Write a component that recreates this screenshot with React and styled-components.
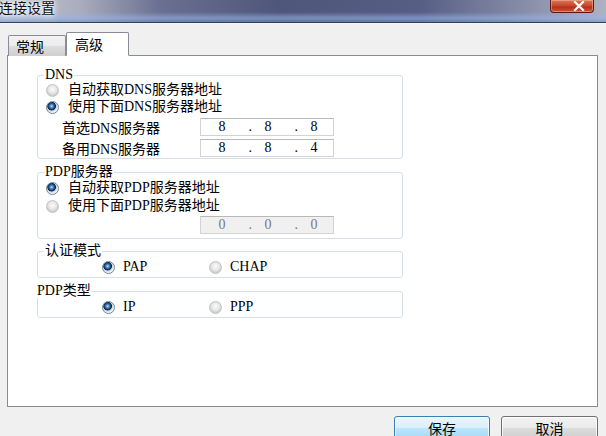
import React from 'react';
import styled, { createGlobalStyle } from 'styled-components';

const GlobalStyle = createGlobalStyle`
  html, body {
    margin: 0;
    padding: 0;
    background: #f0f0f0;
    overflow: hidden;
  }
  body {
    font-family: "Liberation Serif", "Noto Sans CJK SC", serif;
    font-size: 14px;
    color: #000;
  }
`;

const Window = styled.div`
  width: 606px;
  height: 436px;
  display: flex;
  flex-direction: column;
  background: #f0f0f0;
  overflow: hidden;
`;

const TitleBar = styled.div`
  height: 22px;
  flex: none;
  display: flex;
  justify-content: space-between;
  align-items: flex-start;
  border-bottom: 1px solid #2f3f5e;
  background:
    linear-gradient(180deg, rgba(255,255,255,0) 0%, rgba(255,255,255,0) 55%, rgba(150,180,230,0.6) 82%, rgba(110,140,195,0.5) 100%),
    linear-gradient(90deg, #c3c6d0 0px, #a9adbd 80px, #6a7092 160px, #4f567b 280px, #565e86 420px, #8a90aa 530px, #aeb2c2 606px);
`;

const Title = styled.div`
  font-family: "Noto Sans CJK SC", sans-serif;
  font-size: 14px;
  line-height: 15px;
  margin-left: -1px;
  color: #111;
  text-shadow: 0 0 6px #fff, 0 0 3px #fff, 0 0 10px #fff;
`;

const CloseButton = styled.div`
  width: 44px;
  height: 13px;
  margin-right: 12px;
  display: flex;
  align-items: center;
  justify-content: center;
  padding-left: 14px;
  box-sizing: border-box;
  border: 1px solid #5e1a10;
  border-top: none;
  border-radius: 0 0 4px 4px;
  background: linear-gradient(180deg, #d9765c 0%, #c84a2e 45%, #b3321a 60%, #c9563a 100%);
  box-shadow: inset 0 0 0 1px rgba(255,200,180,0.45);
`;

const Body = styled.div`
  flex: 1;
  display: flex;
  flex-direction: column;
  padding: 9px 8px 0 7px;
  border-top: 1px solid #f6f6f6;
`;

const TabStrip = styled.div`
  display: flex;
  align-items: flex-end;
  padding-left: 1px;
  height: 23px;
  margin-bottom: -1px;
  position: relative;
  z-index: 1;
`;

const Tab = styled.div`
  box-sizing: border-box;
  height: ${p => (p.$active ? '24px' : '21px')};
  width: ${p => (p.$active ? '63px' : '58px')};
  padding: ${p => (p.$active ? '2px 0 0 8px' : '1px 0 0 7px')};
  line-height: 18px;
  font-family: "Noto Sans CJK SC", sans-serif;
  font-size: 14px;
  border: 1px solid #898c95;
  border-bottom: ${p => (p.$active ? '1px solid #fff' : 'none')};
  border-radius: 2px 2px 0 0;
  background: ${p =>
    p.$active
      ? '#fff'
      : 'linear-gradient(180deg, #f2f2f2 0%, #ebebeb 50%, #dddddd 51%, #cfcfcf 100%)'};
`;

const Panel = styled.div`
  box-sizing: border-box;
  height: 352px;
  background: #fff;
  border: 1px solid #898c95;
  padding: 0 0 0 29px;
  display: flex;
  flex-direction: column;
  align-items: flex-start;
`;

const Group = styled.fieldset`
  box-sizing: border-box;
  width: 366px;
  margin: ${p => p.$top}px 0 0 0;
  padding: 0 0 ${p => p.$bottom}px 0;
  border: 1px solid #d5dfe5;
  border-radius: 3px;
  min-inline-size: 0;
`;

const Legend = styled.legend`
  padding: 0 1px;
  margin-left: ${p => (p.$flush ? '-2px' : '6px')};
  line-height: 14px;
  height: 14px;
  font-size: 14px;
  background: #fff;
`;

const RadioRow = styled.label`
  display: flex;
  align-items: center;
  gap: 9px;
  height: 16px;
  padding-left: 8px;
  margin-top: ${p => p.$top || 0}px;
  line-height: 16px;
  white-space: nowrap;
`;

const Radio = styled.span`
  flex: none;
  width: 11px;
  height: 11px;
  border-radius: 50%;
  border: 1px solid ${p => (p.$checked ? '#74879a' : '#c3c3c3')};
  background: ${p =>
    p.$checked
      ? 'radial-gradient(circle at 42% 38%, #d6ecfa 0px, #4f8cc4 1.5px, #1d4c7e 3px, #0c2440 4px, #c9d0d8 4.6px, #eef1f4 6px)'
      : 'radial-gradient(circle at 50% 40%, #fbfbfb 0px, #e6e6e6 4px, #cdcdcd 6px)'};
`;

const OptionRow = styled.div`
  display: grid;
  grid-template-columns: 107px 120px;
  padding-left: 64px;
  margin-top: 1px;
  height: 16px;
`;

const Option = styled.label`
  display: flex;
  align-items: center;
  gap: 8px;
  line-height: 16px;
`;

const FieldRow = styled.div`
  display: flex;
  align-items: center;
  padding-left: 24px;
  margin-top: ${p => p.$top}px;
  height: 18px;
`;

const FieldLabel = styled.span`
  width: 138px;
  flex: none;
  white-space: nowrap;
`;

const IpBox = styled.div`
  box-sizing: border-box;
  width: 134px;
  height: 18px;
  display: grid;
  grid-template-columns: 24px 22px 24px 22px 24px;
  padding-left: 9px;
  align-items: center;
  font-size: 14px;
  line-height: 16px;
  border: 1px solid #d3d3d3;
  border-top-color: #b8b8b8;
  background: ${p => (p.$disabled ? '#f0f0f0' : '#fff')};
  color: ${p => (p.$disabled ? '#7a7a7a' : '#000')};
`;

const Octet = styled.span`
  text-align: center;
`;

const Dot = styled.span`
  text-align: right;
  padding-right: 4px;
`;

const ButtonRow = styled.div`
  display: flex;
  justify-content: flex-end;
  gap: 11px;
  margin-top: 9px;
`;

const Button = styled.button`
  box-sizing: border-box;
  width: ${p => p.$w}px;
  height: 23px;
  font-family: "Noto Sans CJK SC", sans-serif;
  font-size: 14px;
  line-height: 20px;
  padding: 0;
  color: #000;
  border-radius: 3px;
  border: 1px solid ${p => (p.$primary ? '#3c7fb1' : '#707070')};
  box-shadow: inset 0 0 0 1px rgba(255, 255, 255, 0.75);
  background: ${p =>
    p.$primary
      ? 'linear-gradient(180deg, #eaf6fd 0%, #d9f0fc 50%, #bee6fd 51%, #a7d9f5 100%)'
      : 'linear-gradient(180deg, #f2f2f2 0%, #ebebeb 50%, #dddddd 51%, #cfcfcf 100%)'};
`;

const Ip = ({ parts, disabled }) => (
  <IpBox $disabled={disabled}>
    <Octet>{parts[0]}</Octet>
    <Dot>.</Dot>
    <Octet>{parts[1]}</Octet>
    <Dot>.</Dot>
    <Octet>{parts[2]}</Octet>
  </IpBox>
);

const App = () => {
  return (
    <Window>
      <GlobalStyle />
      <TitleBar>
        <Title>连接设置</Title>
        <CloseButton>
          <svg width="12" height="10" viewBox="0 0 12 10">
            <path d="M2 1 L10 9 M10 1 L2 9" stroke="#fff" strokeWidth="2.2" strokeLinecap="square" />
          </svg>
        </CloseButton>
      </TitleBar>
      <Body>
        <TabStrip>
          <Tab>常规</Tab>
          <Tab $active>高级</Tab>
        </TabStrip>
        <Panel>
          <Group $top={12} $bottom={1}>
            <Legend>DNS</Legend>
            <RadioRow>
              <Radio />
              自动获取DNS服务器地址
            </RadioRow>
            <RadioRow $top={1}>
              <Radio $checked />
              使用下面DNS服务器地址
            </RadioRow>
            <FieldRow $top={3}>
              <FieldLabel>首选DNS服务器</FieldLabel>
              <Ip parts={['8', '8', '8']} />
            </FieldRow>
            <FieldRow $top={3}>
              <FieldLabel>备用DNS服务器</FieldLabel>
              <Ip parts={['8', '8', '4']} />
            </FieldRow>
          </Group>

          <Group $top={6} $bottom={4}>
            <Legend>PDP服务器</Legend>
            <RadioRow $top={1}>
              <Radio $checked />
              自动获取PDP服务器地址
            </RadioRow>
            <RadioRow $top={2}>
              <Radio />
              使用下面PDP服务器地址
            </RadioRow>
            <FieldRow $top={2}>
              <FieldLabel />
              <Ip parts={['0', '0', '0']} disabled />
            </FieldRow>
          </Group>

          <Group $top={5} $bottom={2}>
            <Legend>认证模式</Legend>
            <OptionRow>
              <Option>
                <Radio $checked />
                PAP
              </Option>
              <Option>
                <Radio />
                CHAP
              </Option>
            </OptionRow>
          </Group>

          <Group $top={6} $bottom={2}>
            <Legend $flush>PDP类型</Legend>
            <OptionRow>
              <Option>
                <Radio $checked />
                IP
              </Option>
              <Option>
                <Radio />
                PPP
              </Option>
            </OptionRow>
          </Group>
        </Panel>
        <ButtonRow>
          <Button $primary $w={96}>保存</Button>
          <Button $w={97}>取消</Button>
        </ButtonRow>
      </Body>
    </Window>
  );
};

export default App;
